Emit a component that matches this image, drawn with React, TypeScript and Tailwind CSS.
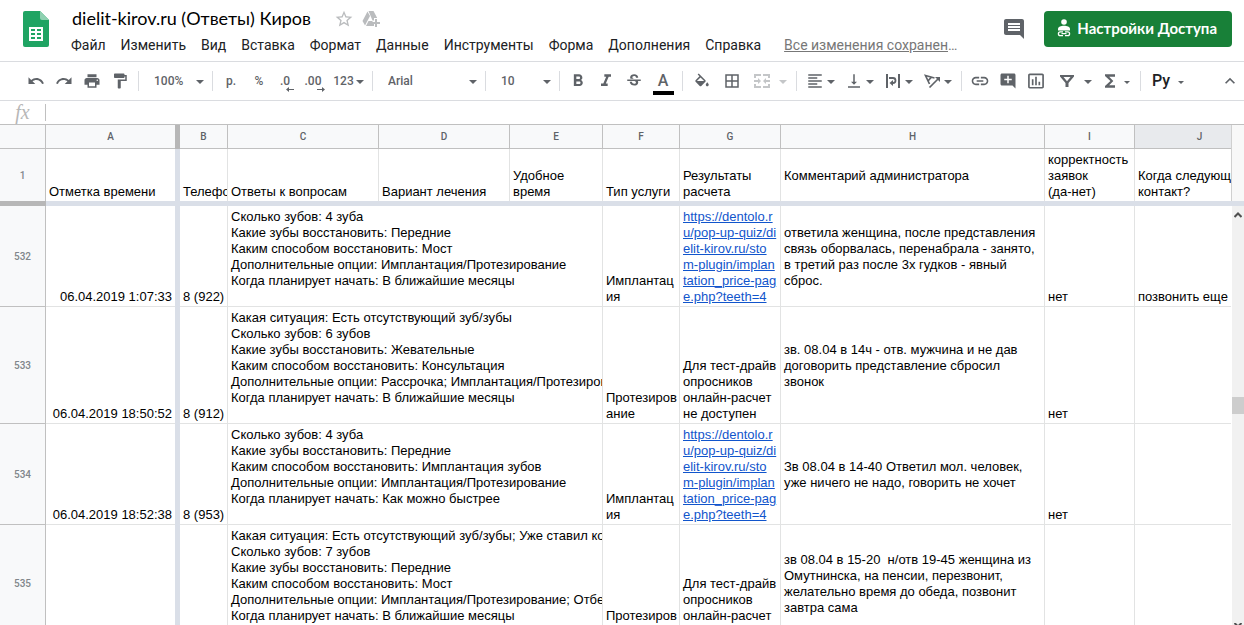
import React from "react";
import clsx from "clsx";
import {
  MdAddComment,
  MdBorderAll,
  MdComment,
  MdFormatAlignLeft,
  MdFormatBold,
  MdFormatItalic,
  MdFormatPaint,
  MdFunctions,
  MdInsertChartOutlined,
  MdInsertLink,
  MdKeyboardArrowUp,
  MdPrint,
  MdRedo,
  MdStarBorder,
  MdStrikethroughS,
  MdUndo,
  MdVerticalAlignBottom,
} from "react-icons/md";

const MENU = [
  "Файл",
  "Изменить",
  "Вид",
  "Вставка",
  "Формат",
  "Данные",
  "Инструменты",
  "Форма",
  "Дополнения",
  "Справка",
];

const PRICE_URL =
  "https://dentolo.r\nu/pop-up-quiz/di\nelit-kirov.ru/sto\nm-plugin/implan\ntation_price-pag\ne.php?teeth=4";
const NO_PRICE = "Для тест-драйв\nопросников\nонлайн-расчет\nне доступен";

interface SheetRow {
  id: number;
  tall?: boolean;
  time: string;
  phone: string;
  answers: string;
  service: string;
  result: string;
  isLink?: boolean;
  comment: string;
  valid: string;
  next: string;
}

const ROWS: SheetRow[] = [
  {
    id: 532,
    time: "06.04.2019 1:07:33",
    phone: "8 (922)",
    answers:
      "Сколько зубов: 4 зуба\nКакие зубы восстановить: Передние\nКаким способом восстановить: Мост\nДополнительные опции: Имплантация/Протезирование\nКогда планирует начать: В ближайшие месяцы",
    service: "Имплантац\nия",
    result: PRICE_URL,
    isLink: true,
    comment:
      "ответила женщина, после представления\nсвязь оборвалась, перенабрала - занято,\nв третий раз после 3х гудков - явный\nсброс.",
    valid: "нет",
    next: "позвонить еще",
  },
  {
    id: 533,
    tall: true,
    time: "06.04.2019 18:50:52",
    phone: "8 (912)",
    answers:
      "Какая ситуация: Есть отсутствующий зуб/зубы\nСколько зубов: 6 зубов\nКакие зубы восстановить: Жевательные\nКаким способом восстановить: Консультация\nДополнительные опции: Рассрочка; Имплантация/Протезирование\nКогда планирует начать: В ближайшие месяцы",
    service: "Протезиров\nание",
    result: NO_PRICE,
    comment:
      "зв. 08.04 в 14ч - отв. мужчина и не дав\nдоговорить представление сбросил\nзвонок",
    valid: "нет",
    next: "",
  },
  {
    id: 534,
    time: "06.04.2019 18:52:38",
    phone: "8 (953)",
    answers:
      "Сколько зубов: 4 зуба\nКакие зубы восстановить: Передние\nКаким способом восстановить: Имплантация зубов\nДополнительные опции: Имплантация/Протезирование\nКогда планирует начать: Как можно быстрее",
    service: "Имплантац\nия",
    result: PRICE_URL,
    isLink: true,
    comment:
      "Зв 08.04 в 14-40 Ответил мол. человек,\nуже ничего не надо, говорить не хочет",
    valid: "нет",
    next: "",
  },
  {
    id: 535,
    tall: true,
    time: "",
    phone: "",
    answers:
      "Какая ситуация: Есть отсутствующий зуб/зубы; Уже ставил коронки\nСколько зубов: 7 зубов\nКакие зубы восстановить: Передние\nКаким способом восстановить: Мост\nДополнительные опции: Имплантация/Протезирование; Отбеливание\nКогда планирует начать: В ближайшие месяцы",
    service: "Протезиров\nание",
    result: NO_PRICE,
    comment:
      "зв 08.04 в 15-20  н/отв 19-45 женщина из\nОмутнинска, на пенсии, перезвонит,\nжелательно время до обеда, позвонит\nзавтра сама",
    valid: "",
    next: "",
  },
];

// --- Icons ---
const SheetsLogo = () => (
  <svg width="26" height="36" viewBox="0 0 26 36" aria-hidden="true">
    <path d="M2 0h15l9 9v25a2 2 0 0 1-2 2H2a2 2 0 0 1-2-2V2a2 2 0 0 1 2-2z" fill="#1fa463" />
    <path d="M17 0l9 9h-7a2 2 0 0 1-2-2z" fill="#8ed1b1" />
    <path
      d="M6 16h14v14H6zM8 18v2h4v-2zM14 18v2h4v-2zM8 22v2h4v-2zM14 22v2h4v-2zM8 26v2h4v-2zM14 26v2h4v-2z"
      fill="#fff"
      fillRule="evenodd"
    />
  </svg>
);

const DriveAddIcon = () => (
  <svg width="18" height="18" viewBox="0 0 18 18" fill="currentColor" aria-hidden="true">
    <path d="M5.500 1.500L8 6 3 15.500 0.500 11z" />
    <path d="M6.500 1h5l3.700 7H12v2.500H10.500z" />
    <path d="M6.500 11h4v3h1.500v2H4z" />
    <path d="M13 9h2v3h3v2h-3v3h-2v-3h-3v-2h3z" />
  </svg>
);

const ShareIcon = () => (
  <svg width="14" height="18" viewBox="0 0 14 18" fill="#fff" aria-hidden="true">
    <circle cx="7" cy="3" r="2.8" />
    <path d="M1 11.500V10c0-2 3-3.200 6-3.200s6 1.200 6 3.200v1.500z" />
    <path
      d="M6 12.800H3.300a1.900 1.900 0 0 0 0 3.800H6M8 12.800h2.700a1.900 1.900 0 0 1 0 3.800H8M4.500 14.700h5"
      fill="none"
      stroke="#fff"
      strokeWidth="1.300"
    />
  </svg>
);

const FillIcon = () => (
  <svg width="18" height="18" viewBox="0 -2 24 24" fill="currentColor" aria-hidden="true">
    <path d="M16.560 8.940L7.620 0 6.210 1.410l2.380 2.380-5.150 5.150c-.59.59-.59 1.540 0 2.120l5.500 5.500c.29.29.68.44 1.060.44s.77-.15 1.060-.44l5.500-5.500c.59-.58.59-1.530 0-2.120zM5.210 10L10 5.210 14.790 10H5.210zM19 11.500s-2 2.170-2 3.500c0 1.100.9 2 2 2s2-.9 2-2c0-1.330-2-3.500-2-3.500z" />
  </svg>
);

const MergeIcon = () => (
  <svg width="18" height="18" viewBox="0 0 18 18" fill="currentColor" aria-hidden="true">
    <path d="M1 2h7v2H3v2H1zM10 2h7v4h-2V4h-5zM1 12h2v2h5v2H1zM15 12h2v4h-7v-2h5z" />
    <path d="M1 8h4V6l3 3-3 3v-2H1zM17 8h-4V6l-3 3 3 3v-2h4z" />
  </svg>
);

const WrapIcon = () => (
  <svg width="18" height="18" viewBox="0 0 18 18" fill="currentColor" aria-hidden="true">
    <path d="M2 2h2v14H2zM14 2h2v14h-2z" />
    <path
      d="M5 6h4a2.500 2.500 0 0 1 0 5H8"
      fill="none"
      stroke="currentColor"
      strokeWidth="1.800"
    />
    <path d="M9 8v6l-3.500-3z" />
  </svg>
);

const RotateTextIcon = () => (
  <svg width="18" height="18" viewBox="0 0 18 18" aria-hidden="true">
    <path
      d="M6.500 12L2.500 3.500 11.500 6M5 9l3.500-4M6.500 15.500L15 7"
      fill="none"
      stroke="currentColor"
      strokeWidth="1.700"
    />
    <path d="M12 5h5v5z" fill="currentColor" />
  </svg>
);

const FilterIcon = () => (
  <svg width="18" height="18" viewBox="0 0 18 18" fill="currentColor" aria-hidden="true">
    <path d="M2 3h14v1.500L10.500 11v4h-3v-4L2 4.500zM5.500 5L9 9.200 12.500 5z" fillRule="evenodd" />
  </svg>
);

const Caret = ({ small }: { small?: boolean }) => (
  <svg
    width={small ? 6 : 8}
    height={small ? 3 : 4}
    viewBox="0 0 8 4"
    fill="currentColor"
    className="mt-0.5 shrink-0"
    aria-hidden="true"
  >
    <path d="M0 0h8L4 4z" />
  </svg>
);

const DecimalIcon = ({ digits, right }: { digits: string; right?: boolean }) => (
  <span className="flex flex-col items-end pt-1">
    <span className="pr-1 leading-3">{digits}</span>
    <svg width="8" height="5" viewBox="0 0 8 5" fill="currentColor" aria-hidden="true">
      <path d={right ? "M0 2h5V0l3 2.500L5 5V3H0z" : "M8 2H3V0L0 2.500 3 5V3h5z"} />
    </svg>
  </span>
);

// --- Toolbar parts ---
const Divider = () => <div className="mx-1 h-5 w-px shrink-0 bg-[#dadce0]" />;

interface ToolProps {
  label: string;
  children: React.ReactNode;
  className?: string;
}

const Tool = ({ label, children, className = "w-7 justify-center" }: ToolProps) => (
  <button
    type="button"
    aria-label={label}
    className={clsx("flex h-7 shrink-0 items-center", className)}
  >
    {children}
  </button>
);

const MenuTool = ({ label, children }: ToolProps) => (
  <Tool label={label} className="w-[39px]">
    <span className="flex w-[26px] justify-end pr-[3px]">{children}</span>
    <Caret />
  </Tool>
);

interface ToolSelectProps {
  label: string;
  value: string;
  className: string;
}

const ToolSelect = ({ label, value, className }: ToolSelectProps) => (
  <label className={clsx("grid shrink-0 items-center", className)}>
    <select
      aria-label={label}
      defaultValue={value}
      className="col-start-1 row-start-1 h-7 w-full appearance-none bg-transparent pl-[11px] outline-none"
    >
      <option>{value}</option>
    </select>
    <span className="pointer-events-none col-start-1 row-start-1 justify-self-end pr-1">
      <Caret />
    </span>
  </label>
);

const Toolbar = () => (
  <div className="flex h-[39px] shrink-0 items-center border-b border-[#dadce0] pl-[22px] font-[Roboto,sans-serif] text-xs font-medium text-[#5f6368]">
    <Tool label="Отменить"><MdUndo size={18} /></Tool>
    <Tool label="Повторить"><MdRedo size={18} /></Tool>
    <Tool label="Печать"><MdPrint size={18} /></Tool>
    <Tool label="Копировать форматирование"><MdFormatPaint size={18} /></Tool>
    <Divider />
    <ToolSelect label="Масштаб" value="100%" className="w-[65px]" />
    <Divider />
    <Tool label="Денежный формат">р.</Tool>
    <Tool label="Процентный формат">%</Tool>
    <Tool label="Уменьшить число знаков"><DecimalIcon digits=".0" /></Tool>
    <Tool label="Увеличить число знаков"><DecimalIcon digits=".00" right /></Tool>
    <Tool label="Другие форматы" className="w-[39px] justify-center gap-0.5">
      123
      <Caret />
    </Tool>
    <Divider />
    <ToolSelect label="Шрифт" value="Arial" className="w-[104px]" />
    <Divider />
    <ToolSelect label="Размер шрифта" value="10" className="w-[65px]" />
    <Divider />
    <Tool label="Полужирный"><MdFormatBold size={20} /></Tool>
    <Tool label="Курсив"><MdFormatItalic size={20} /></Tool>
    <Tool label="Зачеркнутый"><MdStrikethroughS size={18} /></Tool>
    <Tool label="Цвет текста" className="w-[30px] flex-col justify-end gap-0.5">
      <span className="text-base leading-4">A</span>
      <span className="h-1 w-[21px] bg-black" />
    </Tool>
    <Divider />
    <Tool label="Цвет заливки" className="w-[30px] justify-center"><FillIcon /></Tool>
    <Tool label="Границы" className="w-[30px] justify-center"><MdBorderAll size={18} /></Tool>
    <Tool label="Объединить ячейки" className="w-[45px] gap-2 pl-1.5 text-[#c4c6c8]">
      <MergeIcon />
      <Caret />
    </Tool>
    <Divider />
    <MenuTool label="Выравнивание по горизонтали"><MdFormatAlignLeft size={18} /></MenuTool>
    <MenuTool label="Выравнивание по вертикали"><MdVerticalAlignBottom size={18} /></MenuTool>
    <MenuTool label="Перенос текста"><WrapIcon /></MenuTool>
    <MenuTool label="Поворот текста"><RotateTextIcon /></MenuTool>
    <Divider />
    <Tool label="Вставить ссылку"><MdInsertLink size={20} /></Tool>
    <Tool label="Вставить комментарий"><MdAddComment size={18} /></Tool>
    <Tool label="Вставить диаграмму"><MdInsertChartOutlined size={20} /></Tool>
    <Tool label="Фильтр" className="w-[46px] gap-2 pl-2"><FilterIcon /><Caret /></Tool>
    <Tool label="Функции" className="w-10 gap-1 pl-1"><MdFunctions size={20} /><Caret small /></Tool>
    <Divider />
    <Tool label="Способ ввода" className="w-[46px] justify-center gap-2 text-base text-[#202124]">
      Ру
      <span className="text-[#5f6368]"><Caret small /></span>
    </Tool>
    <Tool label="Скрыть меню" className="ml-auto w-7 justify-center">
      <MdKeyboardArrowUp size={20} />
    </Tool>
  </div>
);

const Header = () => (
  <header className="flex h-[62px] shrink-0 items-start border-b border-[#dadce0] pt-[11px] pr-3 pl-[23px]">
    <SheetsLogo />
    <div className="ml-[22px] min-w-0 flex-1">
      <div className="flex h-4 items-center pl-px">
        <h1 className="pb-0.5 font-[Lato,sans-serif] text-lg leading-4 whitespace-nowrap text-black">
          dielit-kirov.ru (Ответы) Киров
        </h1>
        <button type="button" aria-label="Пометить" className="ml-[23px] text-[#babcbe]">
          <MdStarBorder size={20} />
        </button>
        <button type="button" aria-label="Добавить на Диск" className="ml-2 text-[#babcbe]">
          <DriveAddIcon />
        </button>
      </div>
      <nav className="mt-2 flex items-center gap-[15px] font-[Roboto,sans-serif] text-sm leading-5 whitespace-nowrap text-[#202124]">
        {MENU.map((item) => (
          <button key={item} type="button">
            {item}
          </button>
        ))}
        <a href="#history" className="ml-2 w-[176px] truncate text-[#777] underline">
          Все изменения сохранены на Диске
        </a>
      </nav>
    </div>
    <button type="button" aria-label="Комментарии" className="mt-1.5 mr-[18px] text-[#5f6368]">
      <MdComment size={24} />
    </button>
    <button
      type="button"
      className="flex h-9 items-center gap-1.5 rounded bg-[#188038] pr-[15px] pb-0.5 pl-[13px] font-[Lato,sans-serif] text-[15px] font-bold whitespace-nowrap text-white"
    >
      <ShareIcon />
      Настройки Доступа
    </button>
  </header>
);

// --- Grid ---
const COLUMNS = [
  { name: "C", width: "w-[151px]" },
  { name: "D", width: "w-[131px]" },
  { name: "E", width: "w-[93px]" },
  { name: "F", width: "w-[77px]" },
  { name: "G", width: "w-[101px]" },
  { name: "H", width: "w-[264px]" },
  { name: "I", width: "w-[90px]" },
  { name: "J", width: "w-[130px]" },
];

const headCell = "border-r border-b border-[#c0c0c0] p-0 font-medium";
const rowHead =
  "border-r border-[#c0c0c0] bg-[#f8f9fa] px-0 pt-0.5 pb-0 text-center font-[Roboto,sans-serif] text-[10px] font-medium text-[#80868b]";
const cell = "overflow-hidden border-r border-b border-[#e2e3e3] px-[3px] pt-[3px] pb-px";
const topCell = "overflow-hidden border-r border-[#e2e3e3] px-[3px] pt-[3px] pb-px font-normal";

const Sheet = () => (
  <table className="w-[1265px] table-fixed border-separate border-spacing-0 text-left font-['Liberation_Sans',Arial,sans-serif] text-[13px] leading-4 whitespace-pre text-black">
    <colgroup>
      <col className="w-[46px]" />
      <col className="w-[129px]" />
      <col className="w-[5px]" />
      <col className="w-12" />
      {COLUMNS.map((col) => (
        <col key={col.name} className={col.width} />
      ))}
    </colgroup>
    <thead>
      <tr className="h-6 bg-[#f8f9fa] text-center font-[Roboto,sans-serif] text-[10px] text-[#5f6368]">
        <td className={headCell} />
        <th className="border-b border-[#c0c0c0] p-0 font-medium">A</th>
        <td className="bg-[#b7b7b7] p-0" />
        <th className={headCell}>B</th>
        {COLUMNS.map((col) => (
          <th key={col.name} className={clsx(headCell, col.name === "J" && "bg-[#e8eaed]")}>
            {col.name}
          </th>
        ))}
      </tr>
      <tr className="h-[52px] align-bottom">
        <th className={clsx(rowHead, "align-middle")}>1</th>
        <th className="px-[3px] pt-[3px] pb-px font-normal">Отметка времени</th>
        <td className="bg-[#dadfe8] p-0" />
        <th className={topCell}>Телефон</th>
        <th className={topCell}>Ответы к вопросам</th>
        <th className={topCell}>Вариант лечения</th>
        <th className={topCell}>{"Удобное\nвремя"}</th>
        <th className={topCell}>Тип услуги</th>
        <th className={topCell}>{"Результаты\nрасчета"}</th>
        <th className={clsx(topCell, "align-middle")}>Комментарий администратора</th>
        <th className={topCell}>{"корректность\nзаявок\n(да-нет)"}</th>
        <th className={topCell}>{"Когда следующий\nконтакт?"}</th>
      </tr>
      {/* frozen row edge */}
      <tr className="h-[5px]">
        <td className="bg-[#b7b7b7] p-0" />
        <td colSpan={11} className="bg-[#dadfe8] p-0" />
      </tr>
    </thead>
    <tbody>
      {ROWS.map((row) => (
        <tr key={row.id} className={clsx("align-bottom", row.tall ? "h-[117px]" : "h-[101px]")}>
          <th className={clsx(rowHead, "border-b align-middle")}>{row.id}</th>
          <td className="border-b border-[#e2e3e3] px-[3px] pt-[3px] pb-px text-right">
            {row.time}
          </td>
          <td className="bg-[#dadfe8] p-0" />
          <td className={cell}>{row.phone}</td>
          <td colSpan={3} className={clsx(cell, "align-top")}>{row.answers}</td>
          <td className={cell}>{row.service}</td>
          <td className={cell}>
            {row.isLink ? (
              <a href="#price" className="text-[#1155cc] underline">
                {row.result}
              </a>
            ) : (
              row.result
            )}
          </td>
          <td className={clsx(cell, "align-middle")}>{row.comment}</td>
          <td className={cell}>{row.valid}</td>
          <td className={cell}>{row.next}</td>
        </tr>
      ))}
    </tbody>
  </table>
);

const ScrollRail = () => (
  <div className="flex w-[13px] shrink-0 flex-col">
    <div className="h-[76px] shrink-0 border-l border-[#d0d0d0] bg-[#f8f8f8]" />
    <div className="h-[5px] shrink-0 bg-[#dadfe8]" />
    <div className="ml-px flex flex-1 flex-col items-center bg-[#f1f1f1] pt-1.5 text-[#505050]">
      <svg width="8" height="6" viewBox="0 0 8 6" aria-hidden="true">
        <path d="M0.500 5L4 1.500 7.500 5" fill="none" stroke="currentColor" strokeWidth="2" />
      </svg>
      <div className="grow-[179]" />
      <div className="h-[17px] w-full shrink-0 bg-[#cdcdcd]" />
      <div className="grow-[209]" />
      <svg width="8" height="2" viewBox="0 0 8 2" className="shrink-0" aria-hidden="true">
        <path d="M0.500 0L4 3.500 7.500 0" fill="none" stroke="currentColor" strokeWidth="2" />
      </svg>
    </div>
  </div>
);

export default function App() {
  return (
    <div className="flex h-screen flex-col overflow-hidden bg-white">
      <Header />
      <Toolbar />
      <div className="flex h-6 shrink-0 items-center border-b border-[#c0c0c0]">
        <label
          htmlFor="formula"
          className="w-[45px] pb-0.5 text-center font-['Liberation_Serif',serif] text-xl leading-5 text-[#b7b7b7] italic"
        >
          fx
        </label>
        <input
          id="formula"
          type="text"
          className="h-[17px] min-w-0 flex-1 border-l border-[#c0c0c0] px-2 font-['Liberation_Sans',Arial,sans-serif] text-[13px] outline-none"
        />
      </div>
      <main className="flex min-h-0 flex-1">
        <div className="min-w-0 flex-1 overflow-hidden">
          <Sheet />
        </div>
        <ScrollRail />
      </main>
    </div>
  );
}
